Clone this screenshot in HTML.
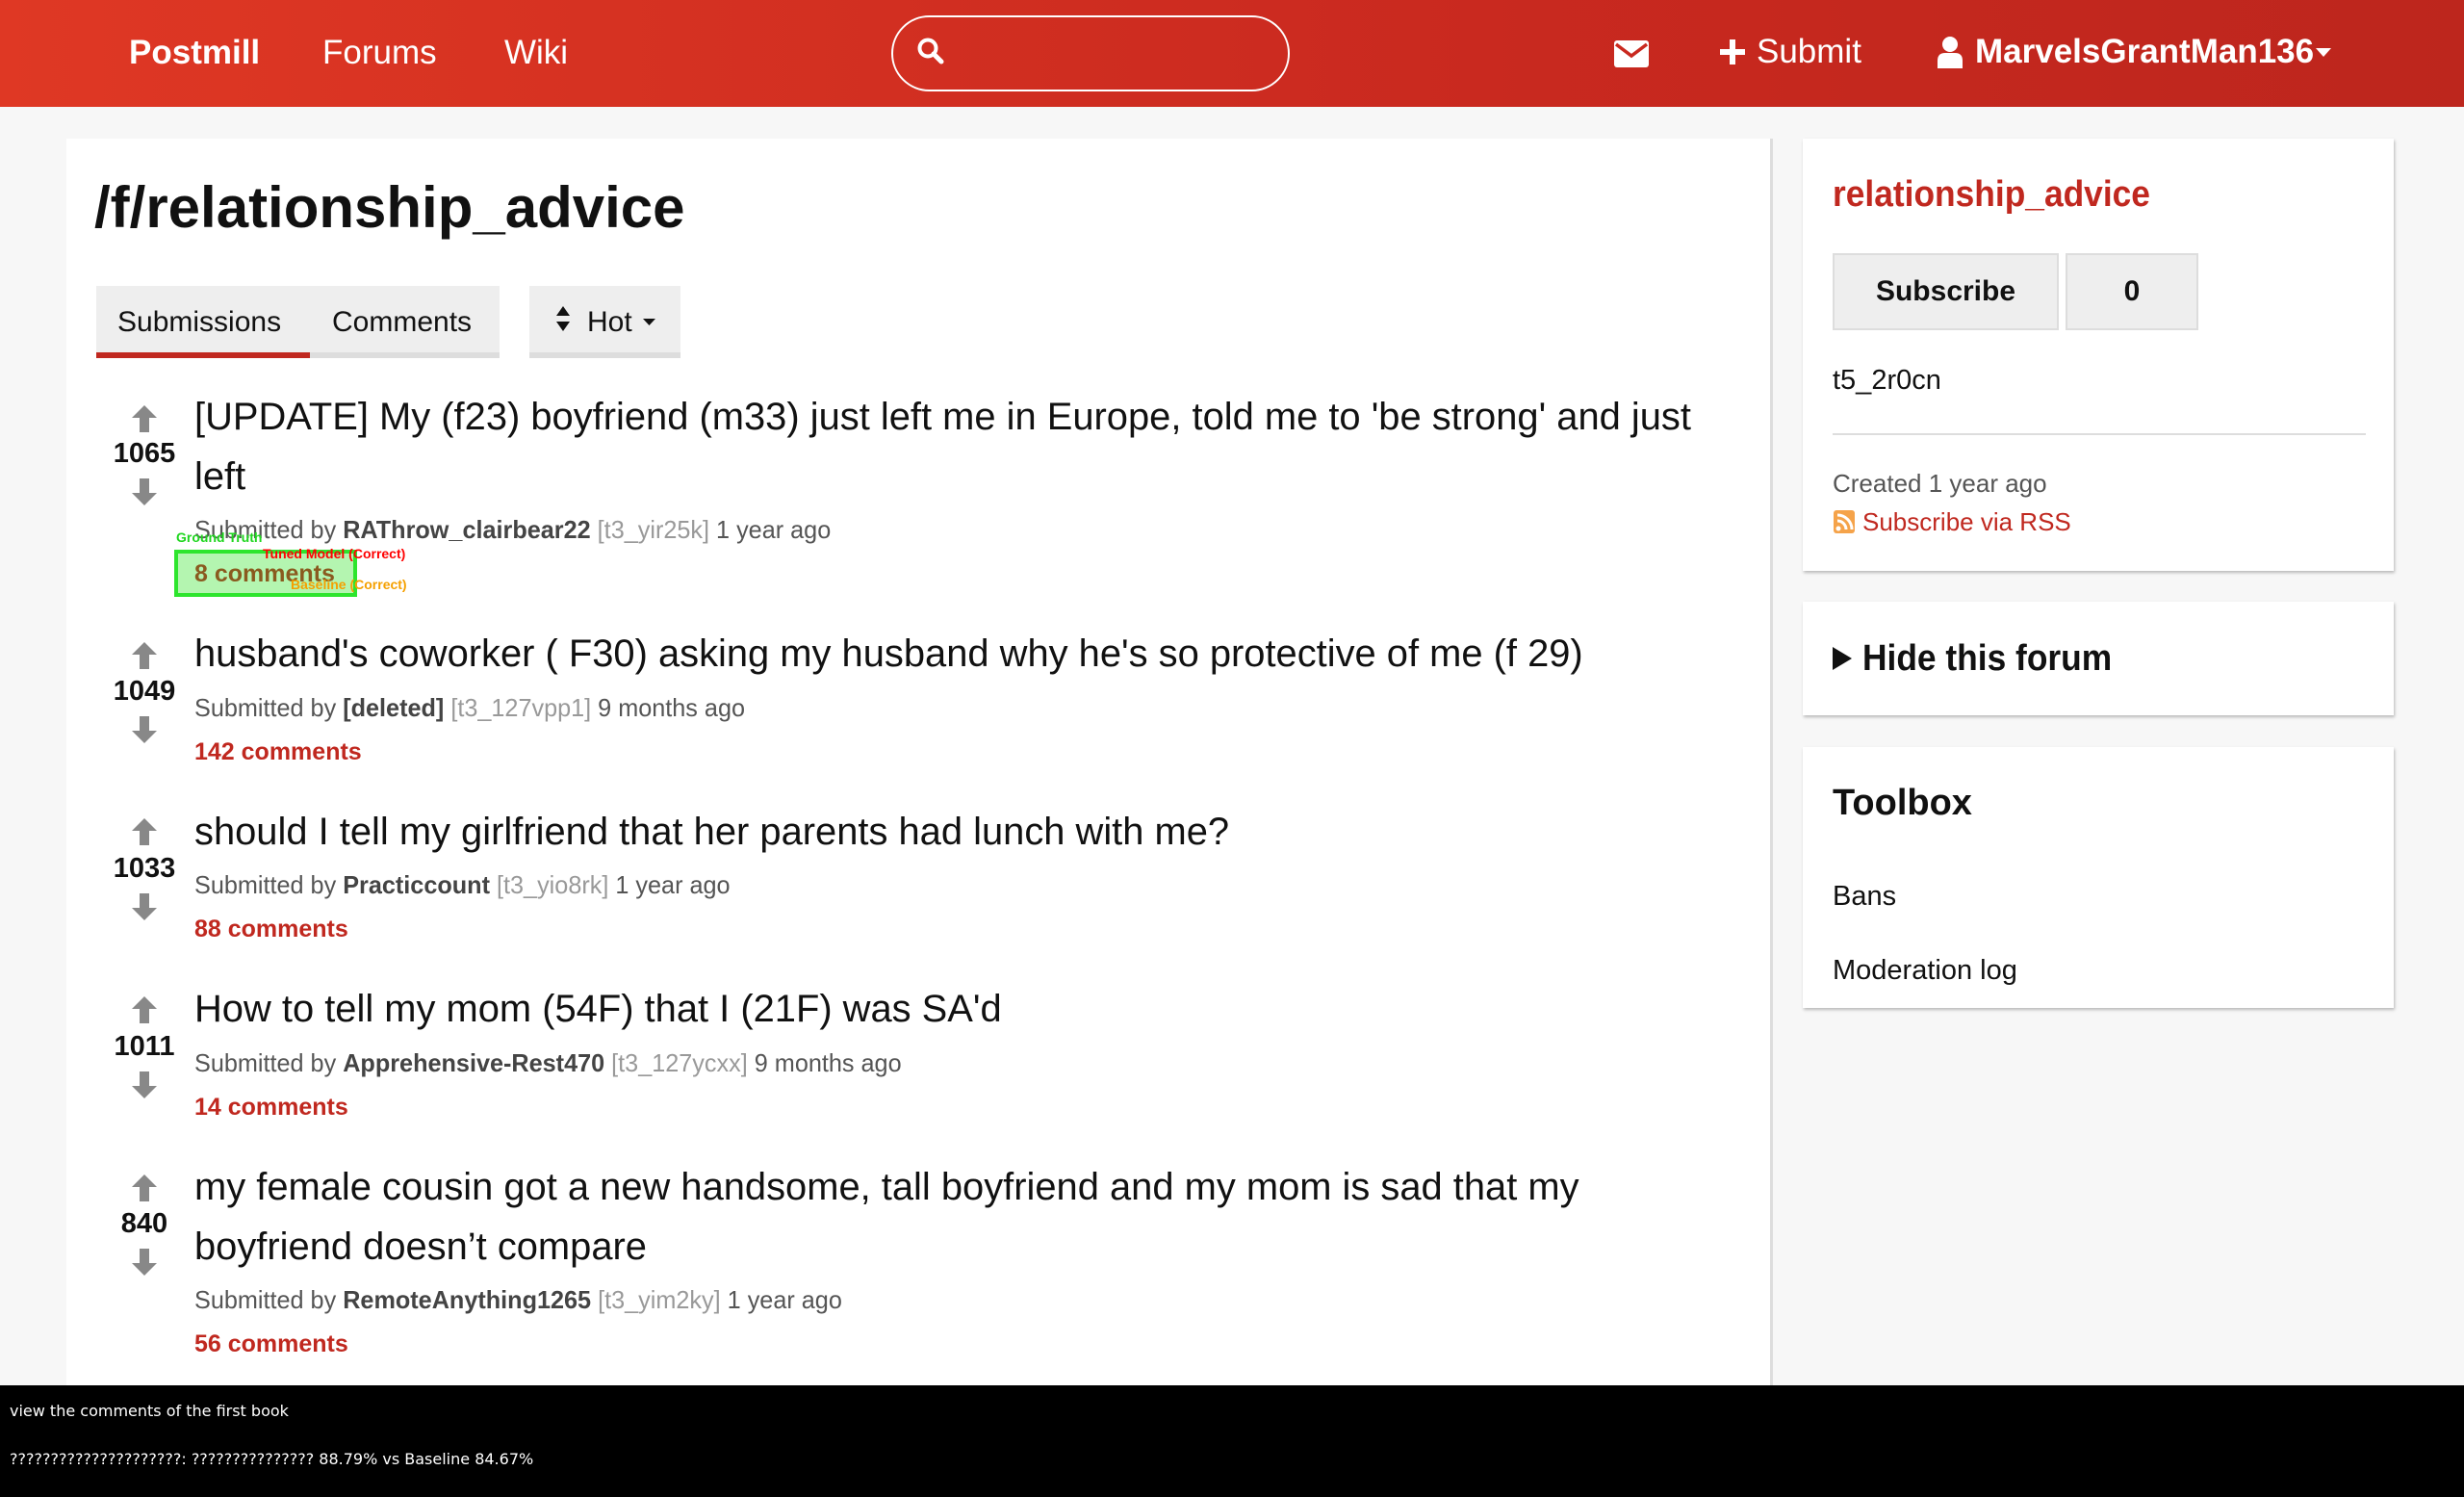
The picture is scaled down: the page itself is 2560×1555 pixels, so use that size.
<!DOCTYPE html>
<html><head><meta charset="utf-8"><style>
*{margin:0;padding:0;box-sizing:border-box}
body{width:2560px;height:1555px;position:relative;overflow:hidden;background:#f7f7f7;font-family:"Liberation Sans",Arial,sans-serif;color:#111}
.a{position:absolute;white-space:nowrap;line-height:1}
.hdr{position:absolute;left:0;top:0;width:2560px;height:111px;background:linear-gradient(90deg,#df3824,#c9291f 60%,#bd261d)}
.hdr .a{color:#fff;font-size:35px}
.main{position:absolute;left:69px;top:144px;width:1773px;height:1300px;background:#fff;border-right:3px solid #ddd}
.side{position:absolute;left:1873px;width:614px;background:#fff;box-shadow:1px 2px 3px rgba(0,0,0,.25)}
.title{font-size:40px;color:#111;transform-origin:left;transform:scaleX(.997)}
.meta{font-size:26px;color:#555;transform-origin:left;transform:scaleX(.97)}
.meta b{color:#444}.meta i{font-style:normal;color:#999}
.cm{font-size:25px;color:#c0281f;font-weight:bold}
.sc{font-size:29px;font-weight:bold;width:70px;text-align:center}
</style></head><body>
<div class="hdr">
<div class="a" style="left:134px;top:37px;font-weight:bold">Postmill</div>
<div class="a" style="left:335px;top:37px">Forums</div>
<div class="a" style="left:524px;top:37px">Wiki</div>
<div style="position:absolute;left:926px;top:16px;width:414px;height:79px;border:2px solid #fff;border-radius:40px"></div>
<svg style="position:absolute;left:952px;top:38px" width="30" height="30" viewBox="0 0 30 30"><circle cx="12" cy="12" r="8.5" fill="none" stroke="#fff" stroke-width="4"/><path d="M18 18l8 8" stroke="#fff" stroke-width="5" stroke-linecap="round"/></svg>
<svg style="position:absolute;left:1677px;top:42px" width="36" height="28" viewBox="0 0 36 28"><rect x="0" y="0" width="36" height="28" rx="3" fill="#fff"/><path d="M2 4l16 12 16-12" fill="none" stroke="#c9291f" stroke-width="3.5"/></svg>
<svg style="position:absolute;left:1785px;top:39px" width="30" height="30"><path d="M15 2v26M2 15h26" stroke="#fff" stroke-width="6"/></svg>
<div class="a" style="left:1825px;top:36px">Submit</div>
<svg style="position:absolute;left:2013px;top:37px" width="26" height="34" viewBox="0 0 26 34"><circle cx="13" cy="9" r="8" fill="#fff"/><path d="M0 34v-8q0-8 8-8h10q8 0 8 8v8z" fill="#fff"/></svg>
<div class="a" style="left:2052px;top:36px;font-weight:bold">MarvelsGrantMan136</div>
<svg style="position:absolute;left:2406px;top:50px" width="16" height="10"><path d="M0 0h16L8 9z" fill="#fff"/></svg>
</div>

<div class="main"></div>
<div class="a" style="left:98px;top:186px;font-size:60px;font-weight:bold">/f/relationship_advice</div>
<div style="position:absolute;left:100px;top:297px;width:419px;height:75px;background:#eee;border-bottom:6px solid #ddd"></div>
<div style="position:absolute;left:100px;top:366px;width:222px;height:6px;background:#c0281f"></div>
<div class="a" style="left:122px;top:320px;font-size:30px">Submissions</div>
<div class="a" style="left:345px;top:320px;font-size:30px">Comments</div>
<div style="position:absolute;left:550px;top:297px;width:157px;height:75px;background:#eee;border-bottom:6px solid #ddd"></div>
<svg style="position:absolute;left:578px;top:318px" width="14" height="26"><path d="M7 0l7 10H0zM7 26l7-10H0z" fill="#111"/></svg>
<div class="a" style="left:610px;top:320px;font-size:30px">Hot</div>
<svg style="position:absolute;left:668px;top:331px" width="13" height="8"><path d="M0 0h13L6.5 7z" fill="#111"/></svg>

<svg width="0" height="0" style="position:absolute"><defs><path id="up" d="M13 0L26 13h-8v15h-10v-15h-8z" fill="#888"/></defs></svg>

<svg style="position:absolute;left:137px;top:421px" width="26" height="28"><use href="#up"/></svg>
<div class="a sc" style="left:115px;top:457px">1065</div>
<svg style="position:absolute;left:137px;top:497px;transform:rotate(180deg)" width="26" height="28"><use href="#up"/></svg>
<div class="a title" style="left:202px;top:413px">[UPDATE] My (f23) boyfriend (m33) just left me in Europe, told me to 'be strong' and just</div>
<div class="a title" style="left:202px;top:475px">left</div>
<div class="a meta" style="left:202px;top:537px">Submitted by <b>RAThrow_clairbear22</b> <i>[t3_yir25k]</i> 1 year ago</div>
<div style="position:absolute;left:181px;top:571px;width:190px;height:49px;background:#b4f5b0;border:4px solid #2de52d"></div>
<div class="a cm" style="left:202px;top:584px;color:#8a5a1f">8 comments</div>
<div class="a" style="left:183px;top:551px;font-size:14px;color:#1fd61f;font-weight:bold">Ground Truth</div>
<div class="a" style="left:273px;top:568px;font-size:14px;color:#f00;font-weight:bold">Tuned Model (Correct)</div>
<div class="a" style="left:302px;top:600px;font-size:14px;color:#f5a000;font-weight:bold">Baseline (Correct)</div>

<svg style="position:absolute;left:137px;top:667px" width="26" height="28"><use href="#up"/></svg>
<div class="a sc" style="left:115px;top:704px">1049</div>
<svg style="position:absolute;left:137px;top:744px;transform:rotate(180deg)" width="26" height="28"><use href="#up"/></svg>
<div class="a title" style="left:202px;top:659px">husband's coworker ( F30) asking my husband why he's so protective of me (f 29)</div>
<div class="a meta" style="left:202px;top:722px">Submitted by <b>[deleted]</b> <i>[t3_127vpp1]</i> 9 months ago</div>
<div class="a cm" style="left:202px;top:769px">142 comments</div>

<svg style="position:absolute;left:137px;top:850px" width="26" height="28"><use href="#up"/></svg>
<div class="a sc" style="left:115px;top:888px">1033</div>
<svg style="position:absolute;left:137px;top:928px;transform:rotate(180deg)" width="26" height="28"><use href="#up"/></svg>
<div class="a title" style="left:202px;top:844px">should I tell my girlfriend that her parents had lunch with me?</div>
<div class="a meta" style="left:202px;top:906px">Submitted by <b>Practiccount</b> <i>[t3_yio8rk]</i> 1 year ago</div>
<div class="a cm" style="left:202px;top:953px">88 comments</div>

<svg style="position:absolute;left:137px;top:1035px" width="26" height="28"><use href="#up"/></svg>
<div class="a sc" style="left:115px;top:1073px">1011</div>
<svg style="position:absolute;left:137px;top:1113px;transform:rotate(180deg)" width="26" height="28"><use href="#up"/></svg>
<div class="a title" style="left:202px;top:1028px">How to tell my mom (54F) that I (21F) was SA'd</div>
<div class="a meta" style="left:202px;top:1091px">Submitted by <b>Apprehensive-Rest470</b> <i>[t3_127ycxx]</i> 9 months ago</div>
<div class="a cm" style="left:202px;top:1138px">14 comments</div>

<svg style="position:absolute;left:137px;top:1220px" width="26" height="28"><use href="#up"/></svg>
<div class="a sc" style="left:115px;top:1257px">840</div>
<svg style="position:absolute;left:137px;top:1297px;transform:rotate(180deg)" width="26" height="28"><use href="#up"/></svg>
<div class="a title" style="left:202px;top:1213px">my female cousin got a new handsome, tall boyfriend and my mom is sad that my</div>
<div class="a title" style="left:202px;top:1275px">boyfriend doesn’t compare</div>
<div class="a meta" style="left:202px;top:1337px">Submitted by <b>RemoteAnything1265</b> <i>[t3_yim2ky]</i> 1 year ago</div>
<div class="a cm" style="left:202px;top:1384px">56 comments</div>

<div class="side" style="top:144px;height:449px"></div>
<div class="a" style="left:1904px;top:183px;font-size:38px;font-weight:bold;color:#c0281f;transform:scaleX(.93);transform-origin:left">relationship_advice</div>
<div style="position:absolute;left:1904px;top:263px;width:235px;height:80px;background:#eee;border:2px solid #ddd"></div>
<div style="position:absolute;left:2146px;top:263px;width:138px;height:80px;background:#eee;border:2px solid #ddd"></div>
<div class="a" style="left:1904px;top:288px;width:235px;text-align:center;font-size:30px;font-weight:bold">Subscribe</div>
<div class="a" style="left:2146px;top:288px;width:138px;text-align:center;font-size:30px;font-weight:bold">0</div>
<div class="a" style="left:1904px;top:381px;font-size:29px">t5_2r0cn</div>
<div style="position:absolute;left:1904px;top:450px;width:554px;height:2px;background:#ddd"></div>
<div class="a" style="left:1904px;top:489px;font-size:26px;color:#555">Created 1 year ago</div>
<svg style="position:absolute;left:1905px;top:530px" width="22" height="24"><rect width="22" height="24" rx="3" fill="#f5a34a"/><circle cx="5" cy="19" r="2.5" fill="#fff"/><path d="M4 11a9 9 0 0 1 9 9M4 5a15 15 0 0 1 15 15" fill="none" stroke="#fff" stroke-width="3"/></svg>
<div class="a" style="left:1935px;top:529px;font-size:26px;color:#c0281f">Subscribe via RSS</div>

<div class="side" style="top:625px;height:118px"></div>
<svg style="position:absolute;left:1904px;top:672px" width="20" height="24"><path d="M0 0l20 12L0 24z" fill="#111"/></svg>
<div class="a" style="left:1935px;top:665px;font-size:38px;font-weight:bold;transform:scaleX(.93);transform-origin:left">Hide this forum</div>

<div class="side" style="top:776px;height:271px"></div>
<div class="a" style="left:1904px;top:815px;font-size:38px;font-weight:bold">Toolbox</div>
<div class="a" style="left:1904px;top:917px;font-size:29px">Bans</div>
<div class="a" style="left:1904px;top:994px;font-size:29px">Moderation log</div>

<div style="position:absolute;left:0;top:1439px;width:2560px;height:116px;background:#000"></div>
<div class="a" style="left:10px;top:1458px;font-size:16px;color:#fff;font-family:'DejaVu Sans',sans-serif">view the comments of the first book</div>
<div class="a" style="left:10px;top:1508px;font-size:16px;color:#fff;font-family:'DejaVu Sans',sans-serif">?????????????????????: ??????????????? 88.79% vs Baseline 84.67%</div>
</body></html>
